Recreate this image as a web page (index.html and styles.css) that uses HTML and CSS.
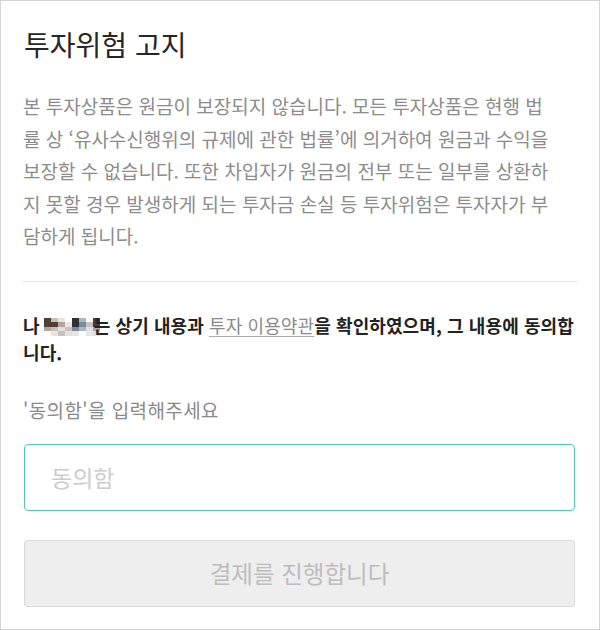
FILE: index.html
```html
<!DOCTYPE html>
<html lang="ko">
<head>
<meta charset="utf-8">
<title>투자위험 고지</title>
<link rel="stylesheet" href="styles.css">
</head>
<body>
<div class="frame">
  <h1 class="title">투자위험 고지</h1>
  <p class="notice">본 투자상품은 원금이 보장되지 않습니다. 모든 투자상품은 현행 법<br>률 상 ‘유사수신행위의 규제에 관한 법률’에 의거하여 원금과 수익을<br>보장할 수 없습니다. 또한 차입자가 원금의 전부 또는 일부를 상환하<br>지 못할 경우 발생하게 되는 투자금 손실 등 투자위험은 투자자가 부<br>담하게 됩니다.</p>
  <hr class="divider">
  <p class="agree">나<span class="mosaic"><span class="mosaic-grid"><i class="c1"></i><i class="c2"></i><i class="c3"></i><i class="c0"></i><i class="c4"></i><i class="c5"></i><i class="c0"></i><i class="c6"></i><i class="c1"></i><i class="c1"></i><i class="c7"></i><i class="c3"></i><i class="c4"></i><i class="c8"></i><i class="c2"></i><i class="c6"></i><i class="c7"></i><i class="c2"></i><i class="c9"></i><i class="c2"></i><i class="c8"></i><i class="c5"></i><i class="c9"></i><i class="c7"></i><i class="c0"></i><i class="c3"></i><i class="c2"></i><i class="c9"></i><i class="c3"></i><i class="c0"></i><i class="c3"></i><i class="c9"></i></span></span>는 상기 내용과 <a class="terms" href="#">투자 이용약관</a>을 확인하였으며, 그 내용에 동의합<br>니다.</p>
  <p class="label">'동의함'을 입력해주세요</p>
  <input class="field" type="text" placeholder="동의함">
  <button class="submit" type="button" disabled>결제를 진행합니다</button>
</div>
</body>
</html>
```
FILE: styles.css
```css
* { box-sizing: border-box; }
html, body { margin: 0; padding: 0; background: #fff; }
body { font-family: "Noto Sans CJK KR", "Noto Sans", sans-serif; }
.frame {
  width: 600px;
  height: 630px;
  border: 1px solid #d4d4d4;
  padding: 0 22px 0 22px;
  display: flex;
  flex-direction: column;
}
.title {
  margin: 24px 0 0 1px;
  font-size: 28px;
  font-weight: 400;
  color: #262626;
  line-height: 38px;
}
.notice {
  margin: 27px 0 0 0;
  font-size: 19px;
  line-height: 32.5px;
  color: #8c8c8c;
  white-space: nowrap;
}
.divider {
  margin: 28px 0 0 0;
  border: 0;
  border-top: 1px solid #e2e2e2;
  height: 0;
}
.agree {
  margin: 30px 0 0 0;
  font-size: 18px;
  line-height: 27px;
  color: #222;
  font-weight: 700;
  letter-spacing: 0.1px;
  white-space: nowrap;
}
.mosaic {
  display: inline-block;
  overflow: hidden;
  width: 56px;
  height: 18px;
  vertical-align: -3px;
  margin: 0 -6px 0 4px;
}
.mosaic-grid {
  display: grid;
  grid-template-columns: repeat(8, 7px);
  grid-template-rows: repeat(4, 4.5px);
}
.mosaic-grid i { display: block; }
.c0 { background: #ffffff; }
.c1 { background: #4e3f38; }
.c2 { background: #cdbfb8; }
.c3 { background: #ebe5e2; }
.c4 { background: #2f2f36; }
.c5 { background: #a8b6c6; }
.c6 { background: #3e3e3a; }
.c7 { background: #b8a49b; }
.c8 { background: #7d8a99; }
.c9 { background: #dde2e8; }
.terms {
  color: #8a8a8a;
  font-weight: 400;
  text-decoration: underline;
  text-decoration-color: #aaa;
  text-underline-offset: 3px;
}
.label {
  margin: 31px 0 0 0;
  font-size: 19px;
  letter-spacing: 0.4px;
  color: #8a8a8a;
  line-height: 26px;
}
.field {
  margin: 21px 0 0 1px;
  width: 551px;
  height: 67px;
  border: 1.5px solid #52c9b6;
  border-radius: 4px;
  padding: 0 0 0 26px;
  font-family: inherit;
  font-size: 23px;
  color: #333;
  outline: none;
  background: #fff;
}
.field::placeholder { color: #cccccc; }
.submit {
  margin: 29px 0 0 1px;
  width: 551px;
  height: 67px;
  background: #eeeeee;
  border: 1px solid #dadada;
  border-radius: 3px;
  font-family: inherit;
  font-size: 23.5px;
  color: #bdbdbd;
  padding: 0;
}
```
